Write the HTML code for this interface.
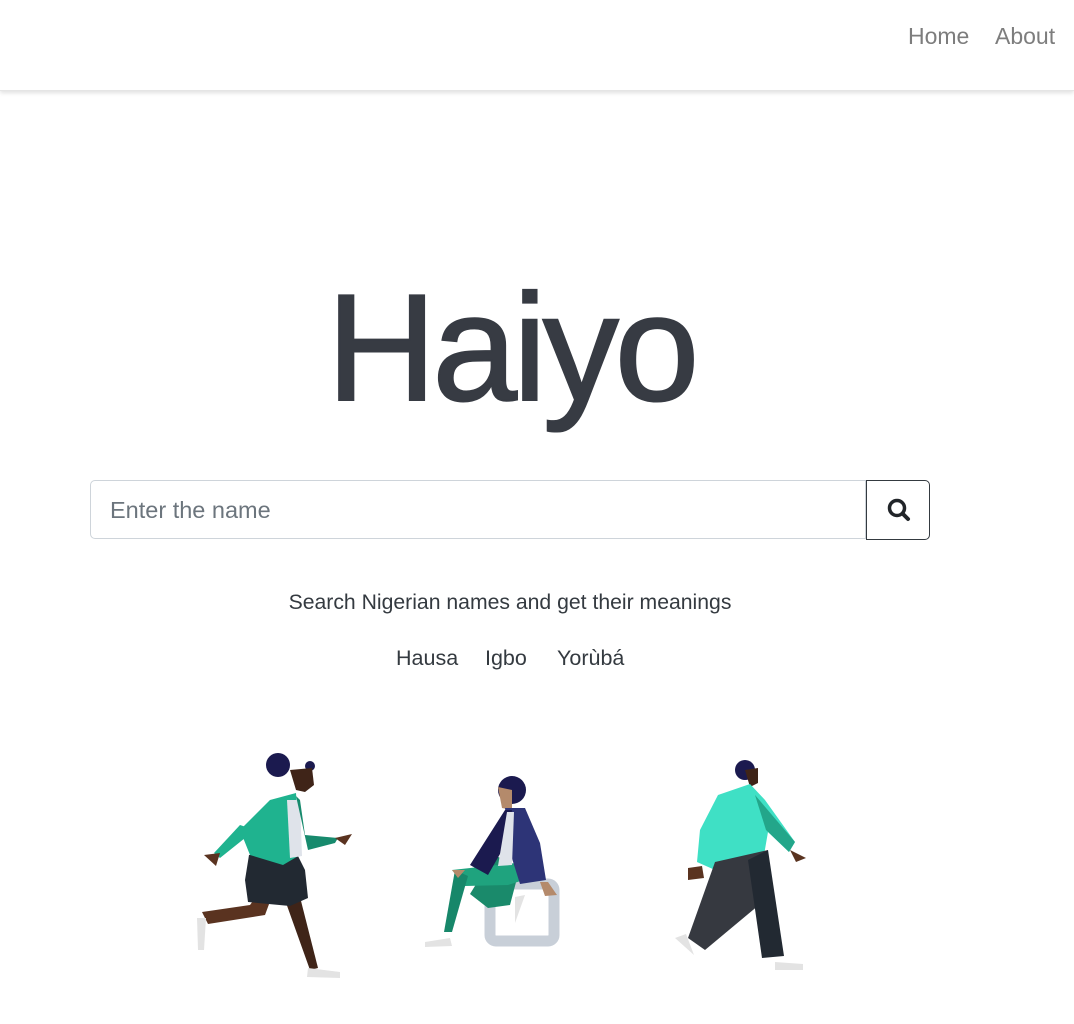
<!DOCTYPE html>
<html><head><meta charset="utf-8"><style>
body{margin:0;width:1074px;height:1024px;background:#fff;font-family:"Liberation Sans",sans-serif;position:relative;overflow:hidden}
.nav{position:absolute;left:0;top:0;width:1074px;height:90px;background:#fff;box-shadow:0 2px 4px rgba(0,0,0,.12);border-bottom:1px solid #e5e5e5}
.nav a{position:absolute;top:23px;font-size:23px;color:#7d7d7d;text-decoration:none}
h1{position:absolute;left:0;width:1022px;text-align:center;top:258px;margin:0;font-size:152px;font-weight:400;color:#373b43;letter-spacing:-4px;line-height:180px;-webkit-text-stroke:2px #373b43}
.inp{position:absolute;left:90px;top:480px;width:776px;height:59px;border:1px solid #ced4da;border-radius:5px 0 0 5px;box-sizing:border-box}
.inp span{position:absolute;left:19px;top:16px;font-size:23.5px;color:#6c757d}
.btn{position:absolute;left:866px;top:480px;width:64px;height:60px;border:1.5px solid #343a40;border-radius:0 5px 5px 0;box-sizing:border-box}
.t{position:absolute;font-size:21.5px;color:#343a40;white-space:nowrap}
</style></head><body>
<div class="nav"><a style="left:908px">Home</a><a style="left:995px">About</a></div>
<h1>Haiyo</h1>
<div class="inp"><span>Enter the name</span></div>
<div class="btn"><svg width="64" height="60" viewBox="0 0 64 60"><circle cx="30" cy="27" r="7.5" fill="none" stroke="#212529" stroke-width="3.5"/><line x1="35.5" y1="32.5" x2="41" y2="38" stroke="#212529" stroke-width="4" stroke-linecap="round"/></svg></div>
<div class="t" style="top:591px;left:282px;width:456px;text-align:center;font-size:21.2px">Search Nigerian names and get their meanings</div>
<div class="t" style="top:646px;left:396px">Hausa</div>
<div class="t" style="top:646px;left:485px">Igbo</div>
<div class="t" style="top:646px;left:557px">Yorùbá</div>
<svg style="position:absolute;left:0;top:0" width="1074" height="1024">
<path d="M208 924 L265 915 L272 896 L258 894 L250 905 L202 912Z" fill="#5a3320"/>
<path d="M285 900 L300 897 L318 968 L310 970Z" fill="#3f2418"/>
<path d="M197 918 L206 918 L204 950 L198 950Z" fill="#e3e3e3"/>
<path d="M308 968 L340 972 L340 978 L307 977Z" fill="#e3e3e3"/>
<path d="M249 855 L296 852 L305 870 L308 898 L290 906 L248 902 L245 880Z" fill="#222932"/>
<circle cx="278" cy="765" r="12" fill="#1b1a4f"/><circle cx="310" cy="766" r="5" fill="#1b1a4f"/>
<path d="M290 770 L312 768 L314 785 L305 792 L296 790Z" fill="#3f2418"/>
<path d="M240 830 L270 800 L296 793 L300 855 L283 865 L250 855Z" fill="#1fb38f"/>
<path d="M287 800 L300 800 L302 856 L290 858Z" fill="#dfe3ea"/>
<path d="M296 796 L308 850 L335 843 L338 838 L305 835 L300 800Z" fill="#178a6d"/>
<path d="M240 825 L255 830 L220 858 L214 853Z" fill="#1fb38f"/>
<path d="M204 855 L220 853 L216 866Z M335 838 L352 834 L345 845Z" fill="#5a3320"/>
<rect x="490" y="884" width="64" height="57" rx="6" fill="none" stroke="#c8cfd8" stroke-width="11"/>
<circle cx="512" cy="790" r="14" fill="#1b1a4f"/>
<path d="M498 787 L512 790 L512 810 L502 808Z" fill="#b48a6b"/>
<path d="M494 855 L520 867 L510 905 L488 908 L470 894Z" fill="#1a8a6b"/>
<path d="M452 870 L525 862 L530 878 L508 885 L465 886Z" fill="#1fa37e"/>
<path d="M455 870 L468 876 L452 932 L444 932Z" fill="#17876a"/>
<path d="M425 942 L450 938 L452 946 L425 947Z M515 897 L525 895 L515 923 Z" fill="#e3e3e3"/>
<path d="M505 808 L525 808 L540 843 L546 880 L520 884 L510 852Z" fill="#2d3477"/>
<path d="M505 810 L512 810 L508 840 L488 875 L470 865Z" fill="#1b1a4f"/>
<path d="M507 812 L514 812 L512 865 L498 866Z" fill="#dfe3ea"/>
<path d="M540 882 L548 882 L557 895 L545 896Z M452 870 L465 870 L458 878Z" fill="#b48a6b"/>
<circle cx="745" cy="770" r="10" fill="#1b1a4f"/>
<path d="M745 770 L758 768 L758 783 L750 787Z" fill="#3f2418"/>
<path d="M718 795 L750 784 L765 800 L795 842 L789 852 L768 832 L764 855 L735 863 L715 870 L697 862 L700 830Z" fill="#3fe0c5"/>
<path d="M755 795 L795 842 L789 852 L766 830Z" fill="#23a68a"/>
<path d="M715 862 L768 850 L765 900 L705 950 L688 938Z" fill="#363940"/>
<path d="M748 860 L768 850 L784 956 L762 958Z" fill="#222932"/>
<path d="M675 938 L686 934 L694 955 Z M775 962 L803 964 L803 970 L775 970Z" fill="#e3e3e3"/>
<path d="M688 868 L702 866 L704 878 L688 880Z M790 850 L806 858 L796 862Z" fill="#5a3320"/>
</svg>
</body></html>
